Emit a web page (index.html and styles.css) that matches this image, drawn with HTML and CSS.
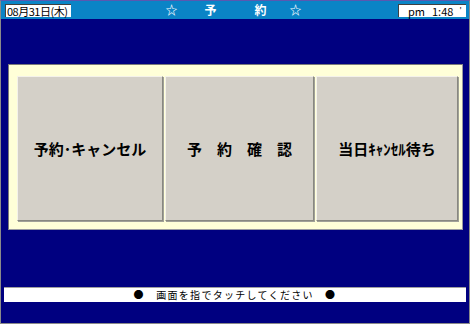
FILE: index.html
```html
<!DOCTYPE html>
<html lang="ja">
<head>
  <meta charset="UTF-8">
  <title>予約</title>
  <link rel="stylesheet" href="styles.css">
</head>
<body>
  <div class="screen">
    <div class="titlebar">
      <div class="datebox">08月31日(木)</div>
      <div class="title">
        <span class="star">☆</span>
        <span class="t1">予</span>
        <span class="t2">約</span>
        <span class="star">☆</span>
      </div>
      <div class="timebox">
        <span class="ampm">pm</span>
        <span class="clock">1:48</span>
        <span class="tick">'</span>
      </div>
    </div>

    <div class="main">
      <div class="panel">
        <button class="menu-btn">予約･キャンセル</button>
        <button class="menu-btn">予　約　確　認</button>
        <button class="menu-btn">当日ｷｬﾝｾﾙ待ち</button>
      </div>
    </div>

    <div class="guide">●　画面を指でタッチしてください　●</div>
  </div>
</body>
</html>
```

FILE: styles.css
```css
body {
  margin: 0;
  padding: 0;
  background-color: #000080;
  font-family: "Noto Sans CJK JP", "DejaVu Sans", sans-serif;
}

.screen {
  width: 470px;
  height: 324px;
  box-sizing: border-box;
  background-color: #000080;
  border: 1px solid #8a8a8a;
  border-top-color: #5a58b0;
  display: flex;
  flex-direction: column;
}

.titlebar {
  height: 18px;
  background-color: #0a84c6;
  display: flex;
  align-items: center;
  padding: 0 3px 0 4px;
}

.datebox {
  width: 66px;
  height: 13px;
  box-sizing: border-box;
  background-color: #fff;
  border-top: 1px solid #404040;
  border-left: 1px solid #404040;
  font-size: 11px;
  line-height: 12px;
  letter-spacing: -0.5px;
  color: #000;
  padding-left: 1px;
  white-space: nowrap;
}

.title {
  flex: 1;
  display: flex;
  justify-content: center;
  color: #fff;
  font-size: 12px;
  font-weight: bold;
  line-height: 12px;
  padding-right: 2px;
}

.title .t1 {
  margin-left: 27px;
}

.title .t2 {
  margin-left: 38px;
  margin-right: 23px;
}

.timebox {
  width: 68px;
  height: 13px;
  box-sizing: border-box;
  background-color: #fff;
  border-top: 1px solid #404040;
  border-left: 1px solid #404040;
  font-size: 11px;
  line-height: 12px;
  color: #000;
  display: flex;
  white-space: nowrap;
}

.timebox .ampm {
  margin-left: 9px;
}

.timebox .clock {
  margin-left: 7px;
}

.timebox .tick {
  margin-left: 6px;
  font-size: 8px;
  line-height: 12px;
}

.main {
  padding: 45px 6px 0 7px;
}

.panel {
  height: 166px;
  box-sizing: border-box;
  background-color: #ffffd8;
  border: 1px solid #7a7a7a;
  border-right-color: #9a9aa0;
  border-bottom-color: #9a9aa0;
  padding: 11px 6px 8px 8px;
  display: grid;
  grid-template-columns: 146px 149px 142px;
  gap: 2px;
}

.menu-btn {
  background-color: #d4d0c8;
  border: 1px solid #888880;
  border-top-color: #f4f2ea;
  border-left-color: #f4f2ea;
  box-shadow: 1px 1px 0 #a0a098;
  font-family: "Noto Sans CJK JP", sans-serif;
  font-size: 15px;
  font-weight: bold;
  color: #000;
  padding: 0;
  white-space: nowrap;
}

.guide {
  margin: 57px 3px 0 3px;
  height: 15px;
  box-sizing: border-box;
  background-color: #fff;
  border-top: 1px solid #a0a0a0;
  font-size: 10px;
  line-height: 14px;
  letter-spacing: 1.3px;
  text-align: center;
  color: #000;
}
```
